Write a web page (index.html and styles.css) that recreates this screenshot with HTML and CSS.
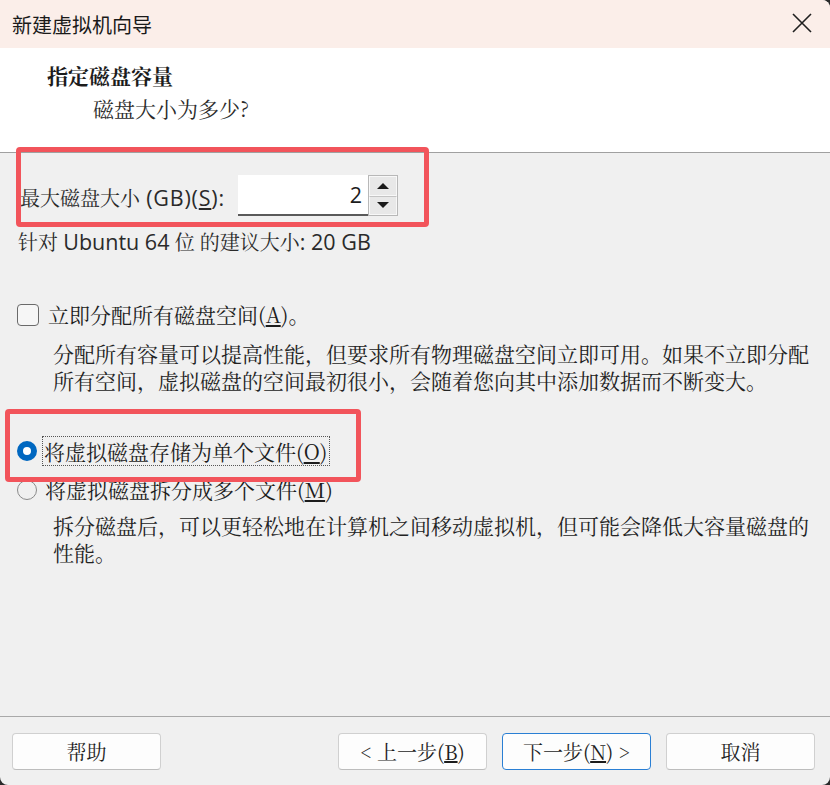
FILE: index.html
```html
<!DOCTYPE html>
<html lang="zh-CN">
<head>
    <meta charset="UTF-8">
    <title>新建虚拟机向导</title>
    <link rel="stylesheet" href="styles.css">
</head>
<body>
    <div class="window">
        <div class="titlebar">
            <span class="title">新建虚拟机向导</span>
            <svg class="close" width="20" height="20" viewBox="0 0 20 20">
                <path d="M1 1 L19 19 M19 1 L1 19" stroke="#1f1f1f" stroke-width="1.6" fill="none"/>
            </svg>
        </div>

        <div class="header">
            <div class="heading">指定磁盘容量</div>
            <div class="subheading">磁盘大小为多少?</div>
        </div>

        <div class="content">
            <div class="size-row">
                <label class="size-label">最大磁盘大小 <span class="lat wide">(GB)(<u>S</u>):</span></label>
                <div class="spin">
                    <div class="spin-value lat">2</div>
                    <div class="spin-buttons">
                        <div class="spin-btn"><span class="arrow-up"></span></div>
                        <div class="spin-btn"><span class="arrow-down"></span></div>
                    </div>
                </div>
            </div>
            <div class="hint">针对 <span class="lat">Ubuntu 64</span> 位 的建议大小<span class="lat">: 20 GB</span></div>

            <div class="option check-row">
                <span class="checkbox"></span>
                <span class="option-text">立即分配所有磁盘空间(<u>A</u>)。</span>
            </div>
            <div class="desc">
                <div class="desc-line">分配所有容量可以提高性能，但要求所有物理磁盘空间立即可用。如果不立即分配</div>
                <div class="desc-line">所有空间，虚拟磁盘的空间最初很小，会随着您向其中添加数据而不断变大。</div>
            </div>

            <div class="option radio-row first">
                <span class="radio checked"></span>
                <span class="option-text focused">将虚拟磁盘存储为单个文件(<u>O</u>)</span>
            </div>
            <div class="option radio-row second">
                <span class="radio"></span>
                <span class="option-text">将虚拟磁盘拆分成多个文件(<u>M</u>)</span>
            </div>
            <div class="desc desc-split">
                <div class="desc-line">拆分磁盘后，可以更轻松地在计算机之间移动虚拟机，但可能会降低大容量磁盘的</div>
                <div class="desc-line">性能。</div>
            </div>
        </div>

        <div class="footer">
            <button class="btn">帮助</button>
            <div class="spacer"></div>
            <button class="btn">&lt; 上一步(<u>B</u>)</button>
            <button class="btn primary">下一步(<u>N</u>) &gt;</button>
            <button class="btn">取消</button>
        </div>

        <div class="mark mark-size"></div>
        <div class="mark mark-single"></div>
    </div>
</body>
</html>
```

FILE: styles.css
```css
body {
    margin: 0;
    background: #2a2a2a;
    font-family: "Noto Sans", "Noto Serif CJK SC", "Noto Sans CJK SC", sans-serif;
    color: #1c1c1c;
}
.window {
    position: relative;
    width: 830px;
    height: 785px;
    display: flex;
    flex-direction: column;
    background: #f0f0f0;
    border-radius: 0 8px 8px 8px;
    overflow: hidden;
}
.titlebar {
    height: 48px;
    flex: none;
    display: flex;
    align-items: center;
    justify-content: space-between;
    padding: 0 18px 0 12px;
    background: #fbeee9;
}
.title {
    font-family: "Noto Sans CJK SC", sans-serif;
    font-size: 20px;
    color: #1a1a1a;
}
.close {
    display: block;
    margin-top: -3px;
}
.header {
    height: 105px;
    flex: none;
    background: #ffffff;
    border-bottom: 1px solid #a0a0a0;
    padding-top: 12px;
    box-sizing: border-box;
}
.heading {
    padding-left: 47px;
    font-family: "Noto Serif CJK SC", "Noto Sans CJK SC", serif;
    font-weight: bold;
    font-size: 21px;
    line-height: 30px;
}
.subheading {
    margin-top: 5px;
    padding-left: 93px;
    font-family: "Noto Serif CJK SC", "Noto Sans CJK SC", serif;
    font-size: 21px;
    line-height: 27px;
    color: #2a2a2a;
}
.content {
    flex: 1;
    padding-top: 22px;
    font-size: 20px;
}
.lat {
    font-family: "Open Sans", "Noto Sans", sans-serif;
    font-size: 21.5px;
}
.lat.wide {
    margin-left: 1px;
    letter-spacing: 0.8px;
}
.size-row {
    display: flex;
    align-items: center;
    height: 41px;
    padding-left: 20px;
}
.size-label {
    width: 218px;
    color: #2a2a2a;
    padding-top: 3px;
    white-space: nowrap;
}
.spin {
    display: flex;
    height: 41px;
}
.spin-value {
    width: 130px;
    box-sizing: border-box;
    background: #fff;
    border-bottom: 2px solid #5a5a5a;
    text-align: right;
    padding-right: 6px;
    line-height: 40px;
}
.spin-buttons {
    width: 30px;
    display: flex;
    flex-direction: column;
    border: 1px solid #b8b8b8;
    box-sizing: border-box;
}
.spin-btn {
    flex: 1;
    background: #e8e8e8;
    border: 1px solid #f8f8f8;
    display: flex;
    align-items: center;
    justify-content: center;
}
.spin-btn + .spin-btn {
    border-top: 1px solid #c4c4c4;
}
.arrow-up {
    border-left: 6px solid transparent;
    border-right: 6px solid transparent;
    border-bottom: 6px solid #1a1a1a;
}
.arrow-down {
    border-left: 6px solid transparent;
    border-right: 6px solid transparent;
    border-top: 6px solid #1a1a1a;
}
.hint {
    margin-top: 12px;
    padding-left: 18px;
    line-height: 27px;
    color: #2a2a2a;
    white-space: nowrap;
}
.option {
    display: flex;
    align-items: center;
    padding-left: 17px;
    font-family: "Noto Serif CJK SC", "Noto Sans CJK SC", serif;
    font-size: 21px;
    white-space: nowrap;
}
.check-row {
    margin-top: 45px;
    height: 27px;
}
.checkbox {
    width: 20px;
    height: 20px;
    border: 1px solid #6a6a6a;
    border-radius: 4px;
    background: #f6f6f6;
    margin-right: 9px;
}
.radio {
    width: 20px;
    height: 20px;
    border: 1px solid #8a8a8a;
    border-radius: 50%;
    margin-right: 8px;
    box-sizing: border-box;
}
.radio.checked {
    border: 6px solid #0067c0;
    background: #fff;
}
.option-text {
    line-height: 27px;
}
.option-text.focused {
    border: 1px dotted #555;
    line-height: 28px;
    padding: 0 2px 0 1px;
    margin-left: -3px;
}
.desc {
    margin: 12px 0 0 53px;
    font-family: "Noto Serif CJK SC", "Noto Sans CJK SC", serif;
    font-size: 21px;
    color: #222;
    white-space: nowrap;
}
.desc-line {
    height: 27px;
    line-height: 27px;
}
.radio-row.first {
    margin-top: 42px;
    height: 30px;
}
.radio-row.second {
    margin-top: 10px;
    height: 27px;
}
.desc-split {
    margin-top: 9px;
}
.footer {
    height: 69px;
    flex: none;
    border-top: 1px solid #a9a9a9;
    display: flex;
    align-items: flex-start;
    gap: 15px;
    padding: 16px 15px 0 12px;
    box-sizing: border-box;
}
.spacer {
    flex: 1;
}
.btn {
    width: 149px;
    height: 37px;
    background: #fdfdfd;
    border: 1px solid #d0d0d0;
    border-bottom-color: #bdbdbd;
    border-radius: 4px;
    font-family: "Noto Serif CJK SC", "Noto Sans CJK SC", serif;
    font-size: 20px;
    color: #1c1c1c;
    padding: 0;
}
.btn.primary {
    border: 1px solid #2a7fd4;
}
.mark {
    position: absolute;
    border: 5px solid #f2545b;
    border-radius: 4px;
    box-sizing: border-box;
}
.mark-size {
    left: 16px;
    top: 147px;
    width: 413px;
    height: 80px;
}
.mark-single {
    left: 5px;
    top: 409px;
    width: 356px;
    height: 73px;
}
```
